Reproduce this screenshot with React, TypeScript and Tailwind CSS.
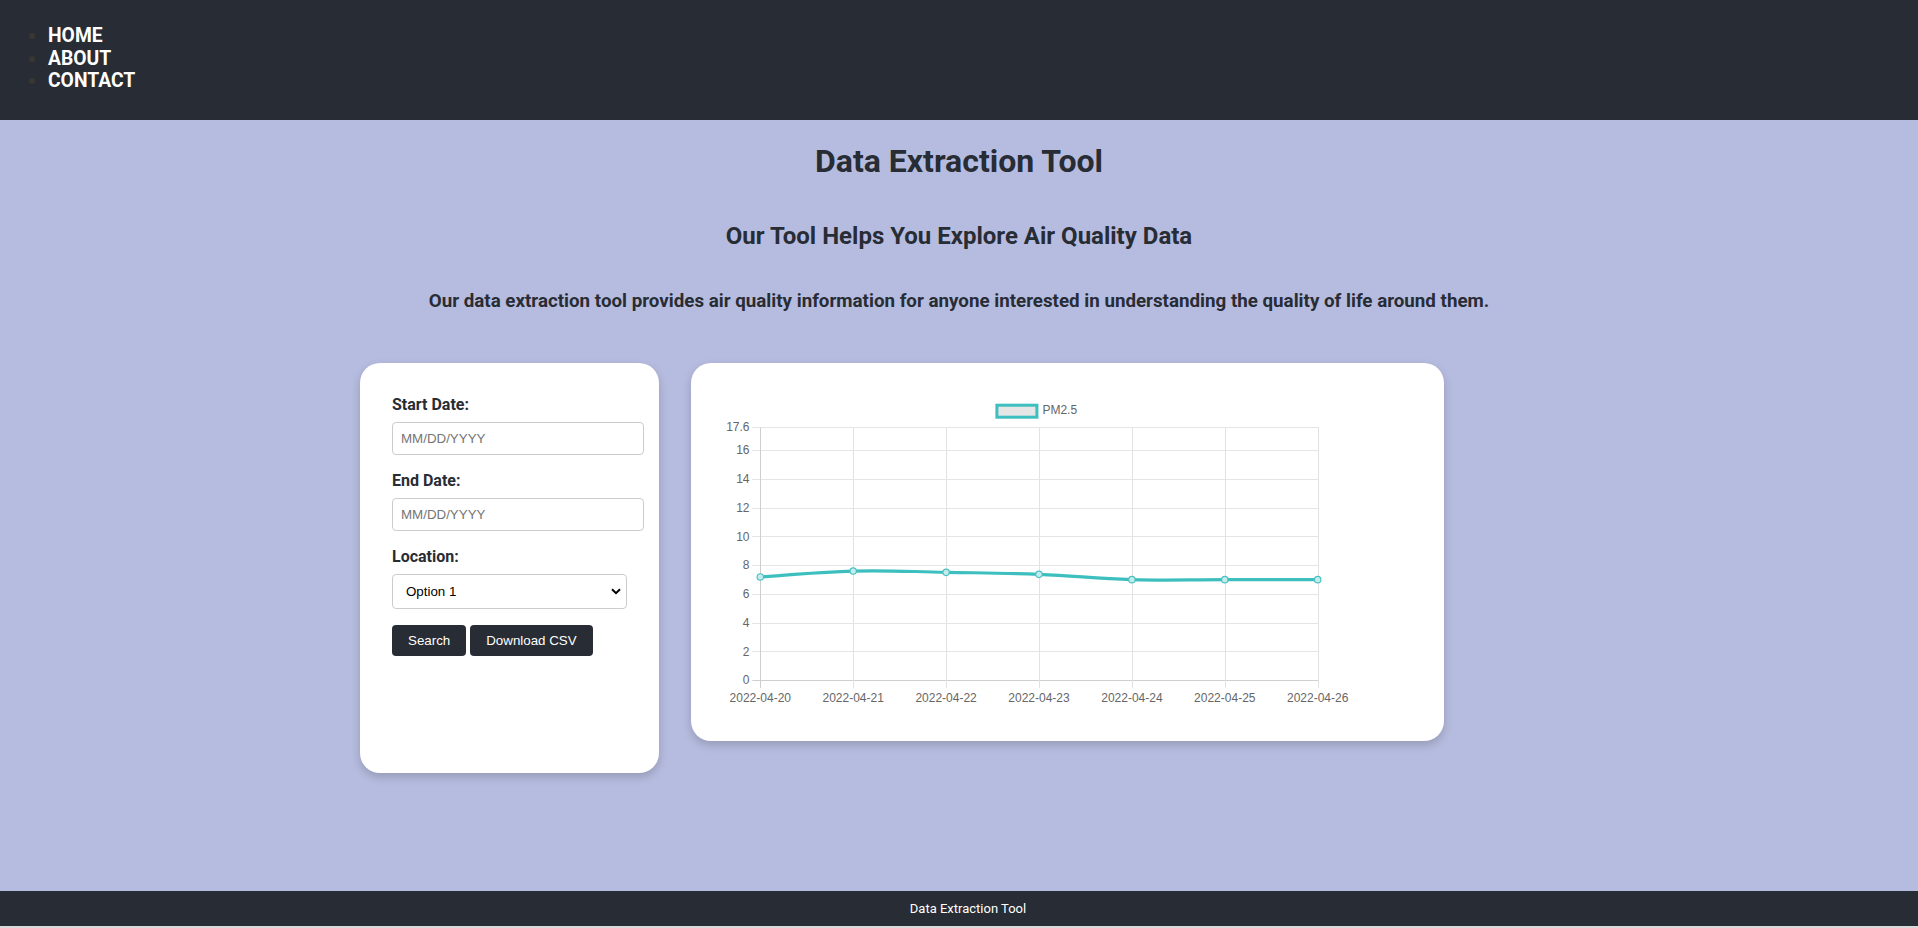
import { useMemo } from "react";

type Pt = { x: number; y: number };

const DATES = [
  "2022-04-20",
  "2022-04-21",
  "2022-04-22",
  "2022-04-23",
  "2022-04-24",
  "2022-04-25",
  "2022-04-26",
];
const VALUES = [7.17, 7.58, 7.49, 7.35, 6.98, 6.98, 6.98];
const TICKS = [0, 2, 4, 6, 8, 10, 12, 14, 16, 17.6];

const LEFT = 69.3;
const RIGHT = 626.7;
const TOP = 64;
const BOTTOM = 317;
const MAX = 17.6;

const xAt = (i: number) => LEFT + (i * (RIGHT - LEFT)) / (DATES.length - 1);
const yAt = (v: number) => BOTTOM - (v * (BOTTOM - TOP)) / MAX;
const crisp = (n: number) => Math.round(n) + 0.5;

// same smoothing Chart.js uses for tension
const buildPath = (pts: Pt[], t: number) => {
  const cps = pts.map((cur, i) => {
    const prev = pts[i - 1] ?? cur;
    const next = pts[i + 1] ?? cur;
    const d01 = Math.hypot(cur.x - prev.x, cur.y - prev.y);
    const d12 = Math.hypot(next.x - cur.x, next.y - cur.y);
    const sum = d01 + d12 || 1;
    const fa = (t * d01) / sum;
    const fb = (t * d12) / sum;
    return {
      prev: { x: cur.x - fa * (next.x - prev.x), y: cur.y - fa * (next.y - prev.y) },
      next: { x: cur.x + fb * (next.x - prev.x), y: cur.y + fb * (next.y - prev.y) },
    };
  });
  let d = `M${pts[0].x},${pts[0].y}`;
  for (let i = 1; i < pts.length; i++) {
    const a = cps[i - 1].next;
    const b = cps[i].prev;
    d += ` C${a.x},${a.y} ${b.x},${b.y} ${pts[i].x},${pts[i].y}`;
  }
  return d;
};

const LineChart = () => {
  const points = useMemo(
    () => VALUES.map((v, i) => ({ x: xAt(i), y: yAt(v) })),
    []
  );
  const path = useMemo(() => buildPath(points, 0.4), [points]);

  return (
    <svg
      width={753}
      height={378}
      viewBox="0 0 753 378"
      className="block font-['Liberation_Sans',Arial,sans-serif]"
    >
      {/* legend */}
      <rect x={305.9} y={42.2} width={40} height={12} fill="#e6e6e6" stroke="#3dbfbf" strokeWidth={3} />
      <text x={351.4} y={51.4} fontSize={12} fill="#666">
        PM2.5
      </text>

      {/* horizontal grid */}
      {TICKS.map((t) => (
        <g key={t}>
          <line
            x1={LEFT - 8}
            x2={crisp(RIGHT)}
            y1={crisp(yAt(t))}
            y2={crisp(yAt(t))}
            stroke={t === 0 ? "#cfcfcf" : "#e5e5e5"}
            strokeWidth={1}
          />
          <text x={58.5} y={yAt(t) + 4.3} fontSize={12} fill="#666" textAnchor="end">
            {t}
          </text>
        </g>
      ))}

      {/* vertical grid */}
      {DATES.map((d, i) => (
        <g key={d}>
          <line
            x1={crisp(xAt(i))}
            x2={crisp(xAt(i))}
            y1={crisp(TOP)}
            y2={BOTTOM + 8}
            stroke={i === 0 ? "#cfcfcf" : "#e2e2e2"}
            strokeWidth={1}
          />
          <text x={xAt(i)} y={339} fontSize={12} fill="#666" textAnchor="middle">
            {d}
          </text>
        </g>
      ))}

      <path d={path} fill="none" stroke="#3dbfbf" strokeWidth={3.2} />
      {points.map((p, i) => (
        <circle
          key={i}
          cx={p.x}
          cy={p.y}
          r={3.2}
          fill="#c5ecec"
          stroke="#4bc0c0"
          strokeWidth={1.2}
        />
      ))}
    </svg>
  );
};

const Field = ({ label }: { label: string }) => (
  <>
    <label className="block text-[16px] leading-[19px] font-bold text-[#282c34] mb-2">
      {label}
    </label>
    <input
      type="text"
      placeholder="MM/DD/YYYY"
      className="block w-[252px] h-[33px] mb-4 px-[8px] border border-[#cccccc] rounded-[4px] bg-white font-['Liberation_Sans',Arial,sans-serif] text-[13.33px] text-black placeholder:text-[#757575] outline-none"
    />
  </>
);

export default function App() {
  return (
    <div className="flex flex-col h-screen font-['Roboto',sans-serif] bg-[#b6bcdf]">
      <header className="h-[120px] shrink-0 bg-[#282c34] pt-[25px]">
        <ul className="list-disc pl-12 text-[19.3px] leading-[22.7px] font-bold text-white marker:text-[#3a3632]">
          <li>HOME</li>
          <li>ABOUT</li>
          <li>CONTACT</li>
        </ul>
      </header>

      <main className="flex-1 text-[#282c34]">
        <h1 className="mt-[22px] text-center text-[32px] leading-[38px] font-bold">
          Data Extraction Tool
        </h1>
        <h2 className="mt-[42px] text-center text-[24px] leading-[28px] font-bold">
          Our Tool Helps You Explore Air Quality Data
        </h2>
        <p className="mt-[40px] text-center text-[18.75px] leading-[22px] font-bold">
          Our data extraction tool provides air quality information for anyone interested in
          understanding the quality of life around them.
        </p>

        <div className="w-[1198px] mx-auto mt-[51px] flex items-start gap-8">
          <div className="w-[299px] h-[410px] shrink-0 bg-white rounded-[20px] shadow-[0_4px_10px_rgba(0,0,0,0.18)] pt-8 pl-8">
            <Field label="Start Date:" />
            <Field label="End Date:" />
            <label className="block text-[16px] leading-[19px] font-bold text-[#282c34] mb-2">
              Location:
            </label>
            <div className="relative w-[235px] mb-4">
              <select className="block w-full h-[35px] appearance-none pl-[13px] pr-8 border border-[#cccccc] rounded-[4px] bg-white font-['Liberation_Sans',Arial,sans-serif] text-[13.33px] text-black outline-none">
                <option>Option 1</option>
                <option>Option 2</option>
                <option>Option 3</option>
              </select>
              <svg
                className="absolute right-[6px] top-[14px] pointer-events-none"
                width="10"
                height="7"
                viewBox="0 0 10 7"
              >
                <path d="M1 1.2 L5 5.2 L9 1.2" fill="none" stroke="#000" strokeWidth="2" />
              </svg>
            </div>
            <div className="flex gap-1">
              <button className="h-[31px] px-4 rounded-[4px] bg-[#282c34] text-white font-['Liberation_Sans',Arial,sans-serif] text-[13.33px]">
                Search
              </button>
              <button className="h-[31px] px-4 rounded-[4px] bg-[#282c34] text-white font-['Liberation_Sans',Arial,sans-serif] text-[13.33px]">
                Download CSV
              </button>
            </div>
          </div>

          <div className="w-[753px] h-[378px] shrink-0 bg-white rounded-[20px] shadow-[0_4px_10px_rgba(0,0,0,0.18)] overflow-hidden">
            <LineChart />
          </div>
        </div>
      </main>

      <footer className="h-[35px] shrink-0 bg-[#282c34] flex items-center justify-center pl-[18px] text-white text-[13px]">
        Data Extraction Tool
      </footer>
      <div className="h-[2px] shrink-0 bg-[#d9d9d9]" />
    </div>
  );
}
